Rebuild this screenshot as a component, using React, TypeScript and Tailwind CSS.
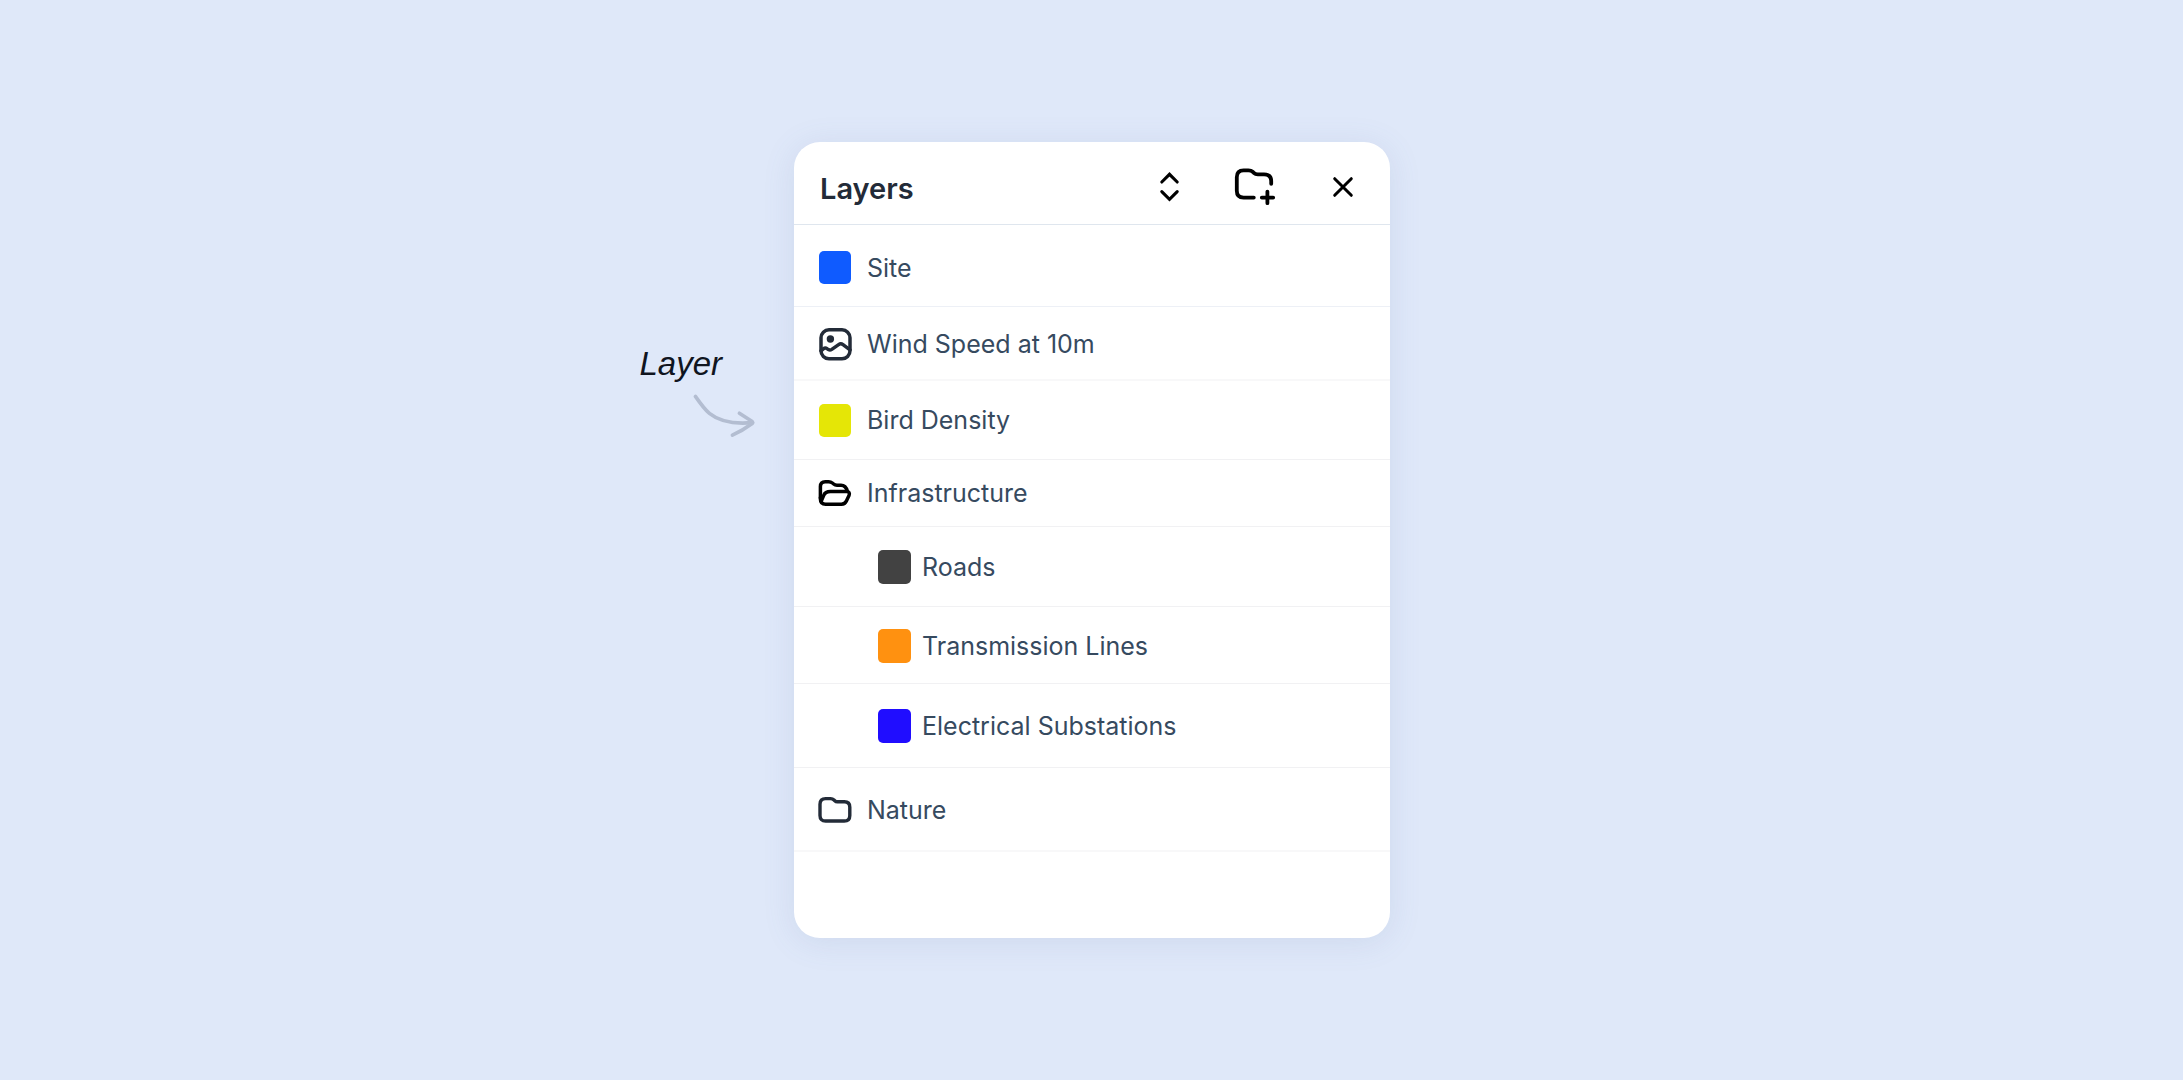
import React from "react";

function ImageIcon() {
  return (
    <svg viewBox="0 0 34 34" className="size-[34px] text-[#232b38]" fill="none" stroke="currentColor" strokeWidth="3.5" strokeLinecap="round" strokeLinejoin="round" aria-hidden="true">
      <rect x="3" y="2.8" width="29" height="29" rx="8" />
      <circle cx="12.4" cy="12" r="3.7" fill="currentColor" stroke="none" />
      <path d="M3 23.8 5.6 21.6Q7.3 20.3 9 21.6L10.4 22.6Q12 23.6 13.8 22.4L20.6 17.6Q22.8 16 25 17.6L32 22.8" />
    </svg>
  );
}

function FolderIcon() {
  return (
    <svg viewBox="0 0 34 34" className="size-[34px] text-[#232b38]" fill="none" stroke="currentColor" strokeWidth="3.4" strokeLinecap="round" strokeLinejoin="round" aria-hidden="true">
      <path d="M2 11.2Q2 5.6 7.6 5.6H12.6Q14.6 5.6 16 7L16.8 7.8Q17.8 8.8 19.4 8.8H26.4Q31.8 8.8 31.8 14.2V22.4Q31.8 28 26.2 28H7.6Q2 28 2 22.4Z" />
    </svg>
  );
}

function OpenFolderIcon() {
  return (
    <svg viewBox="0 0 34 34" className="size-[34px] text-black" fill="none" stroke="currentColor" strokeWidth="3.5" strokeLinecap="round" strokeLinejoin="round" aria-hidden="true">
      <path d="M2.4 22V10.6Q2.4 5.7 7.3 5.7H10.6Q12.8 5.7 14.4 7L15.6 8Q17 9.2 19 9.2H23Q27.8 9.2 29.4 15.2" />
      <path d="M2.4 21.4V23Q2.4 28.2 7.6 28.2H23.4Q27 28.2 28.4 25L31 19.6Q32.4 15.6 28.6 15.6H12.4Q7.2 15.6 5.6 19.6L3.6 24.4" />
    </svg>
  );
}

function ExpandIcon() {
  return (
    <svg viewBox="0 0 48 48" className="size-12" fill="none" stroke="currentColor" strokeWidth="3.1" strokeLinecap="round" strokeLinejoin="miter" aria-hidden="true">
      <path d="M14.8 19 22.5 11.3 30.2 19" />
      <path d="M14.8 28.6 22.5 36.3 30.2 28.6" />
    </svg>
  );
}

function AddFolderIcon() {
  return (
    <svg viewBox="0 0 48 48" className="size-12" fill="none" stroke="currentColor" strokeWidth="3.8" strokeLinecap="round" strokeLinejoin="round" aria-hidden="true">
      <path d="M20.8 34.6H10.6Q3.8 34.6 3.8 27.8V14.2Q3.8 7.4 10.6 7.4H15.4Q18.2 7.4 20 9L20.8 9.8Q22.4 11.4 24.8 11.4H31Q38.2 11.4 38.2 18V20.8" />
      <path d="M28.8 34.6H40.2M34.4 28.6V40.2" />
    </svg>
  );
}

function CloseIcon() {
  return (
    <svg viewBox="0 0 48 48" className="size-12" fill="none" stroke="currentColor" strokeWidth="3" strokeLinecap="round" aria-hidden="true">
      <path d="M15.7 15.7 32.3 32.3M32.3 15.7 15.7 32.3" />
    </svg>
  );
}

function Swatch({ className }: { className: string }) {
  return <span className={`block rounded-[5px] ${className}`} />;
}

type Layer = { name: string; row: string; icon: React.ReactNode; nested?: boolean };

const layers: Layer[] = [
  { name: "Site", row: "h-[82px] pt-1 border-b border-[#edf0f6]", icon: <Swatch className="h-[33px] w-8 bg-[#0f5bff]" /> },
  { name: "Wind Speed at 10m", row: "h-[74px] pt-px border-b-2 border-[#f8f8f9]", icon: <ImageIcon /> },
  { name: "Bird Density", row: "h-[79px] border-b border-[#f1f1f3]", icon: <Swatch className="h-[33px] w-8 bg-[#e5e606]" /> },
  { name: "Infrastructure", row: "h-[67px] border-b border-[#f1f1f3]", icon: <OpenFolderIcon /> },
  { name: "Roads", row: "h-20 border-b border-[#f1f1f3]", icon: <Swatch className="h-[34px] w-[33px] bg-[#424242]" />, nested: true },
  { name: "Transmission Lines", row: "h-[77px] pt-0.5 border-b border-[#f1f1f3]", icon: <Swatch className="h-[34px] w-[33px] bg-[#ff9110]" />, nested: true },
  { name: "Electrical Substations", row: "h-[84px] border-b border-[#f1f1f3]", icon: <Swatch className="h-[34px] w-[33px] bg-[#200dff]" />, nested: true },
  { name: "Nature", row: "h-[84px] pt-0.5 border-b-2 border-[#f8f8f9]", icon: <FolderIcon /> },
];

export default function App() {
  return (
    <main className="grid min-h-screen grid-cols-[1fr_minmax(0,596px)_1fr] content-center bg-[#dfe8f9] pl-px font-['Inter',sans-serif]">
      <aside className="flex flex-col items-end pt-[200px] pr-9">
        <p className="pr-9 font-['Liberation_Sans',sans-serif] text-[33px] leading-[44px] text-[#10151f] italic">Layer</p>
        <svg viewBox="0 0 68 50" className="mt-1 h-[50px] w-[68px]" fill="none" stroke="#b3bdd1" strokeWidth="3.6" strokeLinecap="round" strokeLinejoin="round" aria-hidden="true">
          <path d="M5.4 6.4C10 13 14.6 19.4 19.4 23.4C29 31.2 43 34.4 62.6 32.6" />
          <path d="M49.4 23.2 61.8 31.2Q63.4 32.4 61.8 33.8Q53 40.4 42.4 45.2" />
        </svg>
      </aside>

      <section aria-labelledby="layers-title" className="rounded-[26px] bg-white pb-[86px] shadow-[0_4px_32px_rgba(90,115,165,0.13)]">
        <header className="flex h-[83px] items-center justify-between border-b border-[#dfe6ee] pt-2 pr-[23px] pl-[26px]">
          <h1 id="layers-title" className="pt-1 text-[29px] leading-9 font-semibold text-[#232b38]">Layers</h1>
          <div className="flex gap-[38px] text-black">
            <button type="button" aria-label="Expand or collapse all"><ExpandIcon /></button>
            <button type="button" aria-label="Add folder"><AddFolderIcon /></button>
            <button type="button" aria-label="Close"><CloseIcon /></button>
          </div>
        </header>
        <ul>
          {layers.map((layer) => (
            <li key={layer.name} className={`flex items-center ${layer.nested ? "gap-[11px] pl-[83px]" : "gap-[15px] pl-6"} ${layer.row}`}>
              <span className="flex w-[34px] shrink-0 justify-center">{layer.icon}</span>
              <span className="text-[25px] leading-8 text-[#364a5f]">{layer.name}</span>
            </li>
          ))}
        </ul>
      </section>
    </main>
  );
}
